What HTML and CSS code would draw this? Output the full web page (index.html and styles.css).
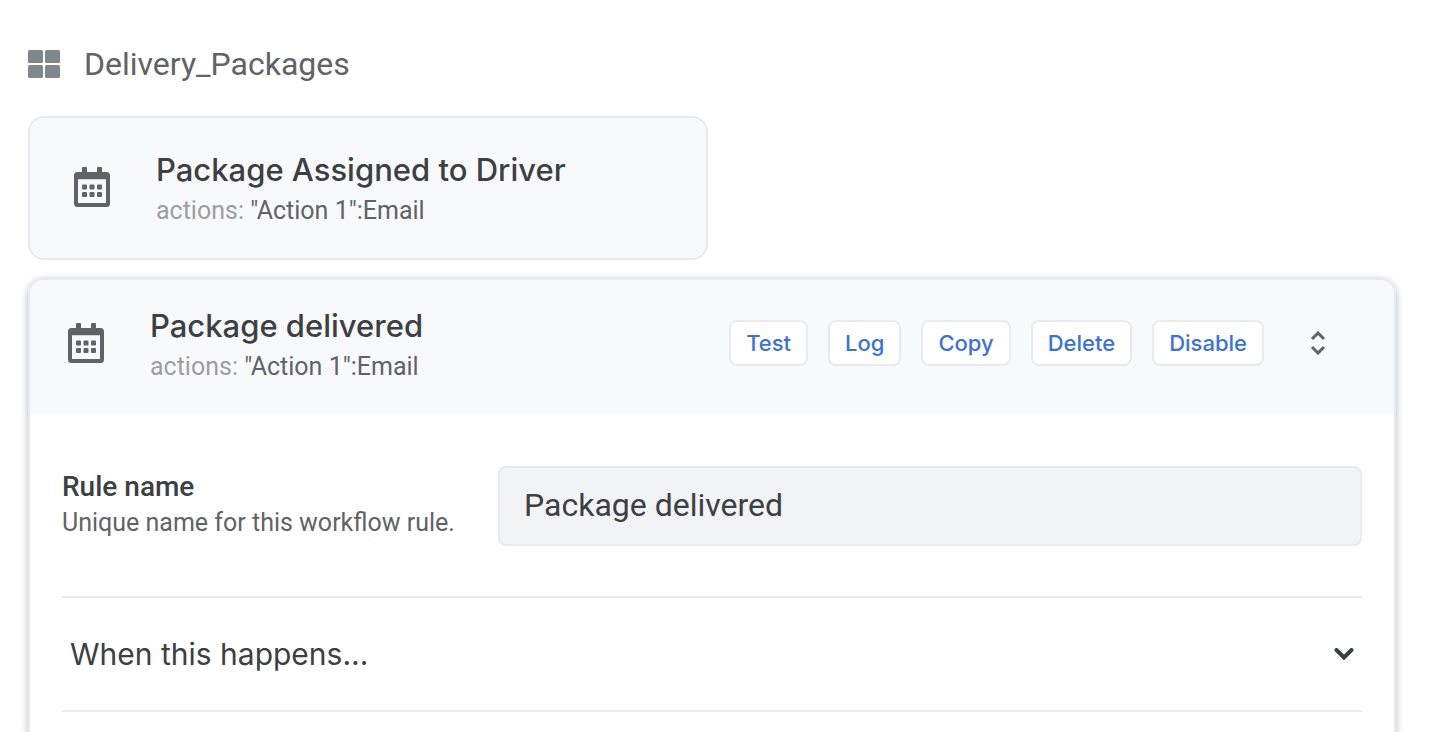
FILE: index.html
```html
<!DOCTYPE html>
<html lang="en">
<head>
<meta charset="utf-8">
<meta name="viewport" content="width=device-width, initial-scale=1">
<title>Delivery_Packages</title>
<link rel="stylesheet" href="styles.css">
</head>
<body>
<svg class="sprite" aria-hidden="true">
  <symbol id="calendar" viewBox="0 0 36 40">
    <rect x="8" y="0" width="5" height="8" rx="1"/>
    <rect x="23" y="0" width="5" height="8" rx="1"/>
    <path fill-rule="evenodd" d="M3.500 5h29a3.500 3.500 0 0 1 3.500 3.500v28a3.500 3.500 0 0 1-3.500 3.500h-29A3.500 3.500 0 0 1 0 36.500v-28A3.500 3.500 0 0 1 3.500 5zM4 12.300v23.700h28V12.300z"/>
    <rect x="8" y="17.500" width="5" height="5" rx="1"/>
    <rect x="15.500" y="17.500" width="5" height="5" rx="1"/>
    <rect x="23" y="17.500" width="5" height="5" rx="1"/>
    <rect x="8" y="25" width="5" height="5" rx="1"/>
    <rect x="15.500" y="25" width="5" height="5" rx="1"/>
    <rect x="23" y="25" width="5" height="5" rx="1"/>
  </symbol>
</svg>
<main class="page">
  <header class="table-heading">
    <svg class="table-icon" viewBox="0 0 32 28" aria-hidden="true">
      <rect x="0" y="0" width="15" height="13" rx="1.500"/>
      <rect x="17" y="0" width="15" height="13" rx="1.500"/>
      <rect x="0" y="15" width="15" height="13" rx="1.500"/>
      <rect x="17" y="15" width="15" height="13" rx="1.500"/>
    </svg>
    <h1 class="table-name">Delivery_Packages</h1>
  </header>

  <section class="rule rule-collapsed">
    <svg class="rule-icon" aria-hidden="true"><use href="#calendar"/></svg>
    <div class="rule-text">
      <h2 class="rule-title">Package Assigned to Driver</h2>
      <p class="rule-actions"><span class="muted">actions:</span> "Action 1":Email</p>
    </div>
  </section>

  <section class="rule rule-open">
    <header class="rule-header">
      <svg class="rule-icon" aria-hidden="true"><use href="#calendar"/></svg>
      <div class="rule-text">
        <h2 class="rule-title">Package delivered</h2>
        <p class="rule-actions"><span class="muted">actions:</span> "Action 1":Email</p>
      </div>
      <div class="toolbar">
        <button class="btn" type="button">Test</button>
        <button class="btn" type="button">Log</button>
        <button class="btn" type="button">Copy</button>
        <button class="btn" type="button">Delete</button>
        <button class="btn" type="button">Disable</button>
      </div>
      <button class="icon-btn" type="button" aria-label="Collapse rule">
        <svg class="sort-icon" viewBox="0 0 16 24" aria-hidden="true"><path d="M2 8l6-6 6 6M2 16l6 6 6-6"/></svg>
      </button>
    </header>
    <div class="rule-body">
      <div class="field">
        <label class="field-label" for="rule-name">
          <span class="field-name">Rule name</span>
          <span class="field-hint">Unique name for this workflow rule.</span>
        </label>
        <input class="field-input" id="rule-name" type="text" value="Package delivered">
      </div>
      <button class="accordion" type="button" aria-expanded="false">
        <span>When this happens...</span>
        <svg class="chevron" viewBox="0 0 20 12" aria-hidden="true"><path d="M2.500 2l7.500 7.500L17.500 2"/></svg>
      </button>
    </div>
  </section>
</main>
</body>
</html>
```

FILE: styles.css
```css
* {
  box-sizing: border-box;
}

body {
  margin: 0;
  background: #fff;
  color: #3c4043;
  font-family: Roboto, "Liberation Sans", sans-serif;
}

h1, h2, p {
  margin: 0;
  font-weight: 400;
}

button {
  font: inherit;
  cursor: pointer;
}

.sprite {
  display: none;
}

.page {
  display: flex;
  flex-direction: column;
  min-height: 100vh;
  padding: 44px 34px 0 28px;
}

.table-heading {
  display: flex;
  align-items: center;
  gap: 24px;
  margin-bottom: 32px;
}

.table-icon {
  width: 32px;
  height: 28px;
  fill: #80868b;
}

.table-name {
  color: #5f6368;
  font-size: 32px;
  line-height: 40px;
}

.rule {
  border: 2px solid #e8eaed;
  border-radius: 16px;
}

.rule-collapsed {
  display: flex;
  align-items: center;
  gap: 46px;
  width: 50%;
  min-width: 320px;
  max-width: 680px;
  margin-bottom: 18px;
  padding: 24px 44px 26px;
  background: #f8f9fb;
}

.rule-icon {
  flex: none;
  width: 36px;
  height: 40px;
  fill: #5f6368;
}

.rule-text {
  padding-top: 8px;
}

.rule-title {
  font-family: Inter, Roboto, sans-serif;
  font-size: 31px;
  font-weight: 500;
  line-height: 40px;
}

.rule-actions {
  color: #5f6368;
  font-size: 25px;
  line-height: 42px;
}

.muted {
  color: #9e9e9e;
}

.rule-open {
  flex: 1;
  border-bottom: 0;
  border-radius: 16px 16px 0 0;
  box-shadow: 0 2px 6px 1px rgba(60, 64, 67, 0.3);
}

.rule-header {
  display: flex;
  align-items: center;
  gap: 46px;
  padding: 18px 62px 26px 38px;
  border-radius: 14px 14px 0 0;
  background: #f8f9fb;
}

.toolbar {
  display: flex;
  gap: 20px;
  margin-left: auto;
}

.btn {
  height: 46px;
  padding: 0 15px;
  border: 2px solid #e8eaed;
  border-radius: 8px;
  background: #fff;
  color: #3871e0;
  font-family: Inter, Roboto, sans-serif;
  font-size: 22px;
  font-weight: 500;
}

.icon-btn {
  display: flex;
  padding: 0 6px;
  border: 0;
  background: none;
}

.rule-header .icon-btn {
  margin-left: -6px;
}

.sort-icon {
  width: 16px;
  height: 24px;
  fill: none;
  stroke: #5f6368;
  stroke-width: 3;
}

.rule-body {
  padding: 0 32px;
}

.field {
  display: flex;
  align-items: center;
  gap: 36px;
  padding: 52px 0 50px;
  border-bottom: 2px solid #e8eaed;
}

.field-label {
  flex: none;
  width: 400px;
  padding-bottom: 2px;
}

.field-name,
.field-hint {
  display: block;
  line-height: 36px;
}

.field-name {
  font-size: 28px;
  font-weight: 500;
}

.field-hint {
  color: #5f6368;
  font-size: 25px;
}

.field-input {
  flex: 1;
  min-width: 0;
  height: 80px;
  padding: 0 24px 2px;
  border: 2px solid #e8eaed;
  border-radius: 8px;
  background: #f1f3f4;
  color: #3c4043;
  font-family: inherit;
  font-size: 32px;
}

.accordion {
  display: flex;
  align-items: center;
  justify-content: space-between;
  width: 100%;
  padding: 36px 8px;
  border: 0;
  border-bottom: 2px solid #e8eaed;
  background: none;
  color: #3c4043;
  font-family: Inter, Roboto, sans-serif;
  font-size: 30px;
  line-height: 40px;
  text-align: left;
}

.chevron {
  width: 20px;
  height: 12px;
  fill: none;
  stroke: #3c4043;
  stroke-width: 4;
  stroke-linecap: round;
}
```
